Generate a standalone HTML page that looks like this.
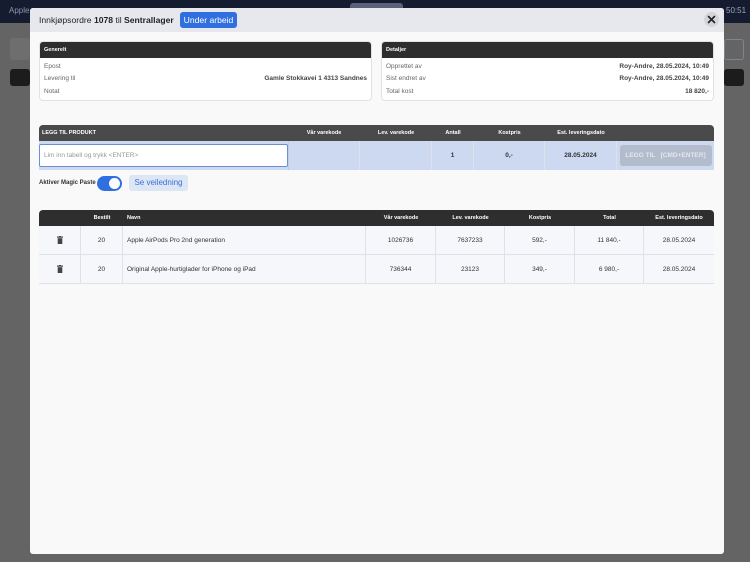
<!DOCTYPE html>
<html><head><meta charset="utf-8"><style>
*{box-sizing:border-box;margin:0;padding:0}
body{width:750px;height:562px;background:#646464;font-family:"Liberation Sans",sans-serif;position:relative;overflow:hidden;color:#333}
.topbar{position:absolute;left:0;top:0;width:750px;height:23px;background:#151c30}
.abs{position:absolute}
.modal{position:absolute;left:30px;top:8px;width:694px;height:546px;background:#f9f9f9;border-radius:3px;overflow:hidden}
.mh{height:24px;background:#e6e8ee;position:relative}
.card{position:absolute;background:#fff;border:1px solid #e2e2e2;border-radius:4px;overflow:hidden;font-size:6.5px}
.ch{height:16px;background:#2e2e2e;color:#fff;font-weight:bold;padding:5px 4px;font-size:5.5px}
.cr{display:flex;justify-content:space-between;padding:0 4px;height:12.5px;align-items:center;color:#666}
.cr b{color:#444}
.tbl{position:absolute;border-radius:4px 4px 0 0;overflow:hidden;font-size:6.5px}
.row{display:flex}
.row div{display:flex;align-items:center;justify-content:center;border-right:1px solid #dde2ea}
.th div{color:#fff;font-weight:bold;font-size:5.5px;border:none}
</style></head><body>
<div class="topbar"></div>
<div class="abs" style="left:9px;top:6px;color:#8a96b0;font-size:8px">Apple</div>
<div class="abs" style="left:726px;top:6px;color:#9aa3b8;font-size:8px">50:51</div>
<div class="abs" style="left:350px;top:3px;width:53px;height:8px;background:#59627a;border-radius:3px"></div>
<div class="abs" style="left:10px;top:38px;width:20px;height:22px;background:#6e6e6e;border-radius:3px"></div>
<div class="abs" style="left:10px;top:69px;width:20px;height:17px;background:#1c1c1c;border-radius:3px"></div>
<div class="abs" style="left:724px;top:39px;width:20px;height:21px;border:1px solid #7c849a;border-radius:3px"></div>
<div class="abs" style="left:724px;top:69px;width:20px;height:17px;background:#1c1c1c;border-radius:3px"></div>
<div class="modal">
 <div class="mh">
  <div class="abs" style="left:9px;top:7px;font-size:8.6px;color:#222;white-space:nowrap">Innkjøpsordre <b>1078</b> til <b>Sentrallager</b></div>
  <div class="abs" style="left:150px;top:4px;width:57px;height:16px;background:#2f6fe0;border-radius:3px;color:#fff;font-size:8.6px;text-align:center;line-height:16px">Under arbeid</div>
  <div class="abs" style="left:674px;top:4px;width:15px;height:15px;border-radius:50%;background:#d3d5da"><svg width="15" height="15" viewBox="0 0 15 15"><path d="M4.5 4.5L10.5 10.5M10.5 4.5L4.5 10.5" stroke="#222" stroke-width="1.6" stroke-linecap="round"/></svg></div>
 </div>
 <div class="card" style="left:9px;top:33px;width:333px;height:60px"><div class="ch">Generelt</div>
  <div style="padding-top:2px"><div class="cr">Epost</div><div class="cr">Levering til<b>Gamle Stokkavei 1 4313 Sandnes</b></div><div class="cr">Notat</div></div></div>
 <div class="card" style="left:351px;top:33px;width:333px;height:60px"><div class="ch">Detaljer</div>
  <div style="padding-top:2px"><div class="cr">Opprettet av<b>Roy-Andre, 28.05.2024, 10:49</b></div><div class="cr">Sist endret av<b>Roy-Andre, 28.05.2024, 10:49</b></div><div class="cr">Total kost<b>18 820,-</b></div></div></div>
 <div class="tbl" style="left:9px;top:117px;width:675px">
  <div class="row th" style="height:16px;background:#4a4a4a">
   <div style="width:249px;justify-content:flex-start;padding-left:3px">LEGG TIL PRODUKT</div><div style="width:72px">Vår varekode</div><div style="width:72px">Lev. varekode</div><div style="width:42px">Antall</div><div style="width:71px">Kostpris</div><div style="width:72px">Est. leveringsdato</div><div style="width:97px"></div>
  </div>
  <div class="row" style="height:29px;background:#cdd9f0">
   <div style="width:249px;border:none;padding:0"><div style="width:249px;height:23px;background:#fff;border:1.5px solid #6a8fd8;border-radius:2px;justify-content:flex-start;padding-left:4px;color:#999;font-size:6.5px">Lim inn tabell og trykk &lt;ENTER&gt;</div></div>
   <div style="width:72px;border-left:1px solid #c2cde2"></div><div style="width:72px"></div><div style="width:42px;font-weight:bold">1</div><div style="width:71px;font-weight:bold">0,-</div><div style="width:72px;font-weight:bold">28.05.2024</div>
   <div style="width:97px;border:none"><div style="width:92px;height:21px;background:#b3bccc;border-radius:3px;color:#e3e7ee;font-weight:bold;font-size:6.5px;border:none">LEGG TIL &nbsp; [CMD+ENTER]</div></div>
  </div>
 </div>
 <div class="abs" style="left:9px;top:172px;font-size:6px;font-weight:bold;color:#333;white-space:nowrap">Aktiver Magic Paste</div>
 <div class="abs" style="left:67px;top:168px;width:25px;height:15px;border-radius:8px;background:#2f6fe0"><div style="position:absolute;right:2px;top:2px;width:11px;height:11px;border-radius:50%;background:#fff"></div></div>
 <div class="abs" style="left:99px;top:167px;width:59px;height:16px;background:#dde6f5;border-radius:3px;color:#3b6fd6;font-size:8px;text-align:center;line-height:16px">Se veiledning</div>
 <div class="tbl" style="left:9px;top:202px;width:675px;border-bottom:1px solid #e2e2e2">
  <div class="row th" style="height:16px;background:#2e2e2e">
   <div style="width:42px"></div><div style="width:42px">Bestilt</div><div style="width:243px;justify-content:flex-start;padding-left:4px">Navn</div><div style="width:70px">Vår varekode</div><div style="width:69px">Lev. varekode</div><div style="width:70px">Kostpris</div><div style="width:69px">Total</div><div style="width:70px">Est. leveringsdato</div>
  </div>
  <div class="row" style="height:29px;background:#f5f7fb;border-bottom:1px solid #dde2ea">
   <div style="width:42px"><svg width="6" height="8" viewBox="0 0 6 8"><rect x="0" y="0.5" width="6" height="1.2" fill="#444"/><rect x="2" y="0" width="2" height="1" fill="#444"/><rect x="0.7" y="2.2" width="4.6" height="5.8" fill="#444"/></svg></div><div style="width:42px">20</div><div style="width:243px;justify-content:flex-start;padding-left:4px">Apple AirPods Pro 2nd generation</div><div style="width:70px">1026736</div><div style="width:69px">7637233</div><div style="width:70px">592,-</div><div style="width:69px">11 840,-</div><div style="width:70px;border:none">28.05.2024</div>
  </div>
  <div class="row" style="height:28px;background:#f5f7fb">
   <div style="width:42px"><svg width="6" height="8" viewBox="0 0 6 8"><rect x="0" y="0.5" width="6" height="1.2" fill="#444"/><rect x="2" y="0" width="2" height="1" fill="#444"/><rect x="0.7" y="2.2" width="4.6" height="5.8" fill="#444"/></svg></div><div style="width:42px">20</div><div style="width:243px;justify-content:flex-start;padding-left:4px">Original Apple-hurtiglader for iPhone og iPad</div><div style="width:70px">736344</div><div style="width:69px">23123</div><div style="width:70px">349,-</div><div style="width:69px">6 980,-</div><div style="width:70px;border:none">28.05.2024</div>
  </div>
 </div>
</div>
</body></html>
